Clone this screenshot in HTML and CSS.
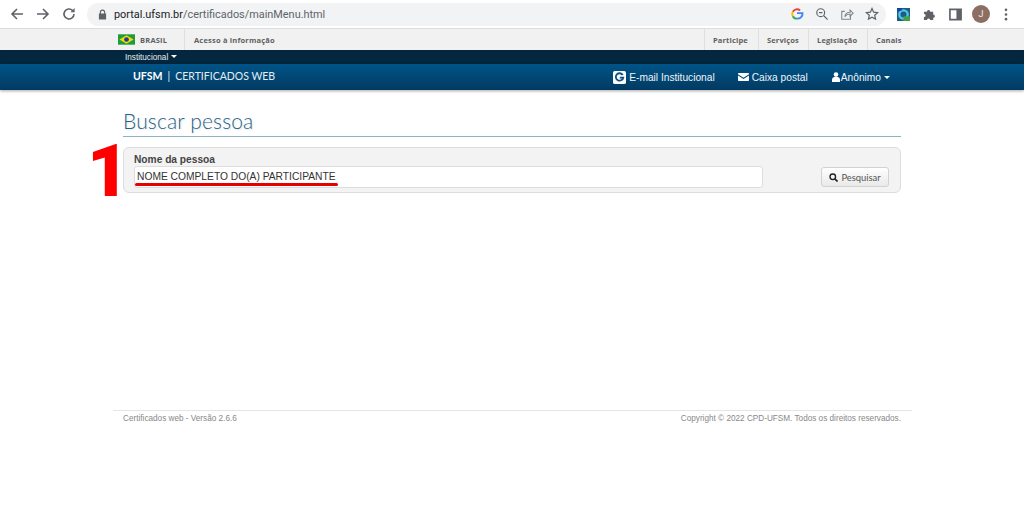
FILE: index.html
```html
<!DOCTYPE html>
<html lang="pt-BR">
<head>
<meta charset="utf-8">
<title>Certificados web</title>
<link rel="stylesheet" href="styles.css">
</head>
<body>
<div class="chrome">
  <svg class="nav-ic" viewBox="0 0 16 16"><path d="M14 8H3M8 3 3 8l5 5" fill="none" stroke="#5f6368" stroke-width="1.6"/></svg>
  <svg class="nav-ic" viewBox="0 0 16 16"><path d="M2 8h11M8 3l5 5-5 5" fill="none" stroke="#5f6368" stroke-width="1.6"/></svg>
  <svg class="nav-ic" viewBox="0 0 16 16"><path d="M13 8a5 5 0 1 1-1.5-3.6" fill="none" stroke="#5f6368" stroke-width="1.6"/><path d="M13.6 2v4.2H9.4z" fill="#5f6368"/></svg>
  <div class="omnibox">
    <svg class="lock" viewBox="0 0 10 12"><path d="M2 5V3.5a3 3 0 0 1 6 0V5h1v6.5H1V5zm1.2 0h3.6V3.5a1.8 1.8 0 0 0-3.6 0z" fill="#5f6368"/></svg>
    <span class="url"><span class="url-host">portal.ufsm.br</span>/certificados/mainMenu.html</span>
    <span class="omni-icons">
      <svg class="omni-ic" viewBox="0 0 16 16"><path d="M8 7h6.300c.3 3.600-2.300 6.300-6.300 6.300" fill="none" stroke="#4285f4" stroke-width="2.200"/><path d="M3.200 5.500A5.300 5.300 0 0 1 11.500 4" fill="none" stroke="#ea4335" stroke-width="2.200"/><path d="M3.200 5.500a5.300 5.300 0 0 0 0 5" fill="none" stroke="#fbbc05" stroke-width="2.200"/><path d="M3.200 10.500a5.300 5.300 0 0 0 4.800 2.800" fill="none" stroke="#34a853" stroke-width="2.200"/></svg>
      <svg class="omni-ic" viewBox="0 0 16 16"><circle cx="6.500" cy="6.500" r="4.500" fill="none" stroke="#5f6368" stroke-width="1.300"/><path d="M10 10l4.500 4.500M4.500 6.500h4" stroke="#5f6368" stroke-width="1.300" fill="none"/></svg>
      <svg class="omni-ic" viewBox="0 0 16 16"><path d="M12 9.500V14H2V5h3.500" fill="none" stroke="#80868b" stroke-width="1.200"/><path d="M5.500 11c.5-3.500 3-5 6-5V3.500L15 7l-3.500 3.500V8c-2.500 0-4.500 1-6 3z" fill="none" stroke="#80868b" stroke-width="1.200"/></svg>
      <svg class="omni-ic" viewBox="0 0 16 16"><path d="m8 1.800 1.900 4.100 4.500.5-3.300 3 .9 4.400L8 11.600l-4 2.200.9-4.400-3.300-3 4.500-.5z" fill="none" stroke="#5f6368" stroke-width="1.400"/></svg>
    </span>
  </div>
  <div class="ext-icons">
    <svg class="ext-ic" viewBox="0 0 14 14"><rect width="14" height="14" fill="#1f5f7a"/><circle cx="7" cy="7" r="4.500" fill="none" stroke="#4fc3f7" stroke-width="2.500"/><path d="M7 9h7v5H7z" fill="#43a047"/><path d="M0 0h5v3H0z" fill="#1a3fa0"/></svg>
    <svg class="ext-ic" viewBox="0 0 14 14"><path d="M1 4h3.200a1.800 1.800 0 1 1 3.600 0H11v3a1.800 1.800 0 1 1 0 3.600V13H7.800a1.800 1.800 0 1 0-3.600 0H1V9.800a1.800 1.800 0 1 0 0-3.600z" fill="#5f6368"/></svg>
    <svg class="ext-ic ext-last" viewBox="0 0 14 14"><path d="M1 1.500h12v11H1z" fill="none" stroke="#5f6368" stroke-width="1.800"/><path d="M8 1.500h5v11H8z" fill="#5f6368"/></svg>
    <span class="avatar">J</span>
    <svg class="kebab" viewBox="0 0 4 14"><circle cx="2" cy="2" r="1.400" fill="#5f6368"/><circle cx="2" cy="7" r="1.400" fill="#5f6368"/><circle cx="2" cy="12" r="1.400" fill="#5f6368"/></svg>
  </div>
</div>

<div class="gov-bar">
  <div class="gov-left">
    <svg class="flag" viewBox="0 0 18 11"><rect width="18" height="11" fill="#1f9a3c"/><path d="M9 1 16.500 5.500 9 10 1.500 5.500z" fill="#f5d90a"/><circle cx="9" cy="5.500" r="2.500" fill="#1c3f8f"/></svg>
    <span class="gov-brasil">BRASIL</span>
  </div>
  <div class="gov-access">Acesso à informação</div>
  <nav class="gov-links">
    <span class="gov-link w-participe">Participe</span>
    <span class="gov-link w-servicos">Serviços</span>
    <span class="gov-link w-legis">Legislação</span>
    <span class="gov-link w-canais">Canais</span>
  </nav>
</div>

<div class="inst-bar"><span class="inst-label">Institucional <i class="caret caret-sm"></i></span></div>

<header class="app-bar">
  <div class="brand"><b class="brand-ufsm">UFSM</b><span class="brand-sep">|</span><span class="brand-name">CERTIFICADOS WEB</span></div>
  <nav class="app-nav">
    <span class="app-link link-mail"><svg class="g-ic" viewBox="0 0 14 14"><rect width="14" height="14" rx="2" fill="#fff"/><path d="M10.500 4.300A4 4 0 1 0 11 7.200H7.300" fill="none" stroke="#0d5286" stroke-width="2"/></svg>E-mail Institucional</span>
    <span class="app-link link-box"><svg class="env-ic" viewBox="0 0 14 10"><path d="M0 1.500V1a1 1 0 0 1 1-1h12a1 1 0 0 1 1 1v.5L7 6z" fill="#fff"/><path d="M0 3v6a1 1 0 0 0 1 1h12a1 1 0 0 0 1-1V3L7 7.500z" fill="#fff"/></svg>Caixa postal</span>
    <span class="app-link"><svg class="user-ic" viewBox="0 0 9 11"><circle cx="4.500" cy="2.800" r="2.600" fill="#fff"/><path d="M0 11V8a3 3 0 0 1 2.500-2.500h4A3 3 0 0 1 9 8v3z" fill="#fff"/></svg>Anônimo <i class="caret"></i></span>
  </nav>
</header>

<main class="content">
  <h1 class="title">Buscar pessoa</h1>
  <div class="step-row">
    <span class="step">1</span>
    <form class="panel">
      <div class="field">
        <label class="field-label">Nome da pessoa</label>
        <div class="input">NOME COMPLETO DO(A) PARTICIPANTE<span class="underline"></span></div>
      </div>
      <button class="btn" type="button"><svg class="search-ic" viewBox="0 0 10 10"><circle cx="4.200" cy="4.200" r="3.100" fill="none" stroke="#222" stroke-width="1.500"/><path d="m6.500 6.500 3 3" stroke="#222" stroke-width="1.800"/></svg>Pesquisar</button>
    </form>
  </div>
</main>

<footer class="footer">
  <span>Certificados web - Versão 2.6.6</span>
  <span>Copyright © 2022 CPD-UFSM. Todos os direitos reservados.</span>
</footer>
</body>
</html>
```

FILE: styles.css
```css
* { box-sizing: border-box; }
html, body { margin: 0; padding: 0; }
body { width: 1024px; height: 517px; overflow: hidden; background: #fff; font-family: "Liberation Sans", Arial, sans-serif; }

.chrome { height: 29px; background: #fff; border-bottom: 1px solid #dcdcdc; display: flex; align-items: center; padding: 0 0 0 9px; }
.nav-ic { width: 16px; height: 16px; margin-right: 10px; flex: none; }
.omnibox { width: 799px; height: 23px; background: #f1f3f4; border-radius: 12px; display: flex; align-items: center; padding: 0 7px 0 11px; flex: none; }
.lock { width: 9px; height: 11px; margin-right: 7px; flex: none; }
.url { font-family: "Roboto", "Liberation Sans", sans-serif; font-size: 10.900px; color: #5f6368; white-space: nowrap; }
.url-host { color: #202124; }
.omni-icons { margin-left: auto; display: flex; gap: 11px; align-items: center; }
.omni-ic { width: 14px; height: 14px; flex: none; }
.ext-icons { display: flex; align-items: center; margin-left: 11px; }
.ext-ic { width: 13px; height: 13px; margin-right: 13px; flex: none; }
.ext-last { margin-right: 10px; }
.avatar { width: 18px; height: 18px; border-radius: 50%; background: #8d6e63; color: #eee; font: 9px "Roboto", sans-serif; display: flex; align-items: center; justify-content: center; margin-right: 14px; flex: none; }
.kebab { width: 4px; height: 13px; flex: none; }

.gov-bar { height: 21px; background: #f1f1f1; display: flex; align-items: stretch; padding-left: 118px; font-family: "Open Sans", sans-serif; font-weight: 700; font-size: 7.500px; color: #606060; }
.gov-left { display: flex; align-items: center; width: 67px; border-right: 1px solid #dfdfdf; }
.flag { width: 17px; height: 11px; margin-right: 5px; flex: none; }
.gov-brasil { letter-spacing: .2px; }
.gov-access { display: flex; align-items: center; padding-left: 9px; letter-spacing: .2px; }
.gov-links { margin-left: auto; display: flex; margin-right: 120px; }
.gov-link { display: flex; align-items: center; padding-left: 8px; border-left: 1px solid #dfdfdf; letter-spacing: .15px; }
.w-participe { width: 54px; }
.w-servicos { width: 50px; }
.w-legis { width: 59px; }
.w-canais { width: 37px; }

.inst-bar { height: 14px; background: #02273f; padding-left: 125px; display: flex; align-items: center; }
.inst-label { color: #e6edf2; font-size: 8.200px; }
.caret { display: inline-block; width: 0; height: 0; border: 3.500px solid transparent; border-top-color: #fff; border-bottom: 0; vertical-align: 1.500px; margin-left: 0; }
.caret-sm { border-width: 3px; border-bottom: 0; }

.app-bar { height: 26px; background: linear-gradient(#005488, #023a62); box-shadow: 0 1px 3px rgba(0,0,0,.35); display: flex; align-items: center; padding-left: 133px; color: #fff; position: relative; }
.brand { display: flex; align-items: center; padding-bottom: 2px; font-family: "Lato", sans-serif; font-weight: 400; font-size: 10.500px; color: #e6edf2; }
.brand-ufsm { font-family: "Lato", sans-serif; font-weight: 700; font-size: 10.600px; color: #fff; }
.brand-sep { margin: 0 5px 0 5px; }
.brand-name { letter-spacing: 0; }
.app-nav { margin-left: auto; margin-right: 134px; display: flex; align-items: center; font-size: 10.200px; color: #f0f4f7; }
.app-link { display: flex; align-items: center; white-space: nowrap; }
.link-mail { margin-right: 23px; }
.link-box { margin-right: 24px; }
.app-link .caret { margin-left: 3px; vertical-align: 0; }
.g-ic { width: 13px; height: 13px; margin-right: 3px; }
.env-ic { width: 11px; height: 8px; margin-right: 3px; }
.user-ic { width: 8px; height: 10px; margin-right: 1px; }

.content { padding: 0 123px; }
.title { margin: 0; padding-top: 16px; height: 47px; border-bottom: 1px solid #8db2c4; font-family: "Lato", sans-serif; font-weight: 300; font-size: 21px; line-height: 29px; color: #1f6488; text-shadow: 1px 1px 2px rgba(0,0,0,.12); letter-spacing: .15px; }
.step-row { position: relative; margin-top: 10px; }
.step { position: absolute; left: -36px; top: -12px; font-family: "Roboto", sans-serif; font-weight: 900; font-size: 73px; line-height: 73px; color: #f00; }
.panel { height: 46px; background: #f3f3f3; border: 1px solid #dcdcdc; border-radius: 6px; display: flex; align-items: flex-start; padding: 5px 11px 0 10px; }
.field { width: 629px; }
.field-label { display: block; font-size: 10.200px; font-weight: 700; line-height: 13px; color: #444; }
.input { position: relative; height: 22px; background: #fff; border: 1px solid #ddd; border-radius: 3px; padding-left: 2px; font-size: 10.250px; line-height: 20px; color: #333; white-space: nowrap; }
.underline { position: absolute; left: 0; top: 16px; width: 203px; height: 3px; background: #e60000; border-radius: 2px; }
.btn { margin-left: auto; margin-top: 14px; width: 68px; height: 20px; padding: 0; background: linear-gradient(#fff, #e9e9e9); border: 1px solid #d2d2d2; border-radius: 3px; font-family: "Lato", sans-serif; font-size: 9.400px; color: #555; display: flex; align-items: center; justify-content: center; }
.search-ic { width: 9px; height: 9px; margin-right: 3px; }

.footer { position: absolute; top: 410px; left: 113px; width: 799px; border-top: 1px solid #e5e5e5; padding: 2px 11px 0 10px; display: flex; justify-content: space-between; font-size: 8.200px; line-height: 12px; color: #888; }
```
